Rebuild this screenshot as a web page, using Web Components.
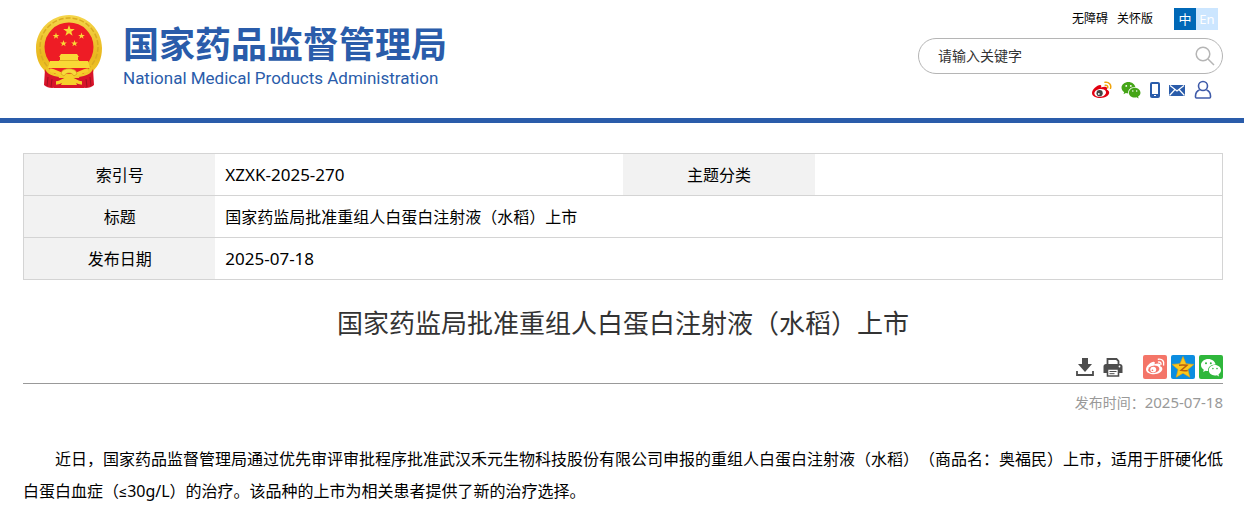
<!DOCTYPE html>
<html lang="zh-CN">
<head>
<meta charset="utf-8">
<title>国家药监局批准重组人白蛋白注射液（水稻）上市</title>
<style>
  body {
    margin: 0;
    background: #fff;
    color: #000;
    font: 16px/32px "Noto Sans", Roboto, "Noto Sans CJK SC", sans-serif;
    text-spacing-trim: space-all;
    --brand: #2a5caa;
    --line: #d4d4d4;
    --page-pad: 0 21px 0 23px;
  }
  main {
    padding: var(--page-pad);
  }
</style>
</head>
<body>
<site-header>
  <brand-logo slot="brand" text="国家药品监督管理局" sub="National Medical Products Administration"></brand-logo>
  <site-tools slot="tools"></site-tools>
</site-header>
<main>
  <info-table code="XZXK-2025-270" name="国家药监局批准重组人白蛋白注射液（水稻）上市" date="2025-07-18"></info-table>
  <article-view date="2025-07-18">
    <span slot="title">国家药监局批准重组人白蛋白注射液（水稻）上市</span>
    近日，国家药品监督管理局通过优先审评审批程序批准武汉禾元生物科技股份有限公司申报的重组人白蛋白注射液（水稻）（商品名：奥福民）上市，适用于肝硬化低白蛋白血症（≤30g/L）的治疗。该品种的上市为相关患者提供了新的治疗选择。
  </article-view>
</main>

<script>
const WECHAT = `
  <path d="M7.400 1C3.300 1 0 3.700 0 7.100c0 1.900 1.100 3.600 2.800 4.700L2.100 14l2.500-1.300c.8.2 1.700.4 2.500.4-.7-3.700 2.700-6.900 7.500-6.700C13.900 3.300 11 1 7.400 1z"/>
  <path d="M20 12.300c0-2.900-2.800-5.200-6.100-5.200s-6.100 2.300-6.100 5.200 2.700 5.200 6.100 5.200c.7 0 1.400-.1 2-.3l2.100 1.200-.5-2c1.500-1 2.500-2.400 2.500-4.100z"/>
  <g class="eye"><circle cx="5" cy="5.200" r="1"/><circle cx="9.800" cy="5.200" r="1"/><circle cx="11.900" cy="10.600" r=".8"/><circle cx="16" cy="10.600" r=".8"/></g>`;

const WEIBO = `
  <path class="body" d="M8.700 6.500c1-1 .9-2.600-.6-2.600C5 4 0 8.500 0 12c0 3.300 4.200 5 8.300 5 5.300 0 8.900-2.900 8.900-5.500 0-1.600-1.300-2.300-2.400-2.700.6-1.600.3-2.500-.8-2.800-1.400-.4-3.200.1-5.300.5z"/>
  <ellipse class="white" cx="8.200" cy="11.900" rx="5.900" ry="3.900" transform="rotate(-9 8.200 11.900)"/>
  <circle class="pupil" cx="7.600" cy="12.200" r="3.100"/>
  <circle class="white" cx="6.800" cy="12.900" r=".9"/>
  <path class="wave" d="M13 1.300c3.900-.7 6.600 2.300 5.500 6M13.200 4.200c1.800-.3 2.900.9 2.500 2.600"/>`;

class SiteHeader extends HTMLElement {
  constructor() {
    super();
    this.attachShadow({ mode: "open" });
    this.shadowRoot.innerHTML = `
      <style>
        :host { display: block; border-bottom: 5px solid var(--brand); }
        header {
          display: flex;
          justify-content: space-between;
          align-items: flex-start;
          padding: var(--page-pad);
        }
      </style>
      <header>
        <slot name="brand"></slot>
        <slot name="tools"></slot>
      </header>
    `;
  }
}
customElements.define("site-header", SiteHeader);

class BrandLogo extends HTMLElement {
  constructor() {
    super();
    this.attachShadow({ mode: "open" });
    this.shadowRoot.innerHTML = `
      <style>
        :host { display: block; padding: 14px 0 28px 13px; }
        a {
          display: flex;
          gap: 20px;
          color: var(--brand);
          text-decoration: none;
          white-space: nowrap;
        }
        svg { display: block; width: 67px; height: 75px; }
        .names { padding-top: 10px; }
        strong { display: block; font-size: 36px; line-height: 42px; }
        span { display: block; font: 17px/24px Roboto, sans-serif; }
      </style>
      <a href="#">
        <svg viewBox="0 0 67 75" aria-hidden="true">
          <defs>
            <linearGradient id="gold" x2="0" y2="1">
              <stop offset="0" stop-color="#f5d64b"/><stop offset=".6" stop-color="#e9b81e"/><stop offset="1" stop-color="#f4cf2e"/>
            </linearGradient>
            <path id="star" d="M0-5 1.200-1.600H4.800L1.900.6 3 4 0 1.900-3 4-1.900.6-4.800-1.600H-1.200z"/>
          </defs>
          <path fill="url(#gold)" d="M33 1C51 1 66 16 66 34c0 11-4 18-8 22l-6 14H14L8 56C4 52 0 45 0 34 0 16 15 1 33 1z"/>
          <circle cx="33" cy="33" r="29" fill="none" stroke="#d9ab22" stroke-width="1.500" stroke-dasharray="5 2"/>
          <circle cx="33" cy="33" r="24.500" fill="#ee1c25"/>
          <g fill="#f9d936">
            <use href="#star" transform="translate(33 17) scale(1.200)"/>
            <use href="#star" transform="translate(20 22) scale(.7)"/>
            <use href="#star" transform="translate(45.500 22) scale(.7)"/>
            <use href="#star" transform="translate(27.500 29.500) scale(.7)"/>
            <use href="#star" transform="translate(38.500 29.500) scale(.7)"/>
            <path d="M25 40h16l2 3H23zM24 43h18v4H24zM14 47h38l2 7H12z"/>
          </g>
          <path d="M23 46.500h20" stroke="#dcae1f"/>
          <path fill="#ee1c25" d="M13 54h40l-6 6H19z"/>
          <path fill="#d8142a" d="M9 55c2 5 7 7 14 8l-3 10c-3 2-9 1-12-2zM57 55c-2 5-7 7-14 8l3 10c3 2 9 1 12-2z"/>
          <path d="M12 63l-1 9M16 65l-1 8M54 63l1 9M50 65l1 8" stroke="#a30f20"/>
          <path fill="#d8142a" d="M18 64h30v10H18z"/>
          <path d="M14 56c7 1 11 6 19 6s12-5 19-6M20 69c5 0 8-4 13-5 5 1 8 5 13 5" fill="none" stroke="#f6cf2b" stroke-width="3.500"/>
          <path d="M25 60c0-7 16-7 16 0l-3 2c-2-4-8-4-10 0z" fill="#f8d93c" stroke="#d49d18" stroke-width=".7"/>
          <path d="M27 66h12l2 5H25z" fill="#f6cf2b"/>
        </svg>
        <div class="names"><strong></strong><span></span></div>
      </a>
    `;
  }

  connectedCallback() {
    this.shadowRoot.querySelector("strong").textContent = this.getAttribute("text");
    this.shadowRoot.querySelector("span").textContent = this.getAttribute("sub");
  }
}
customElements.define("brand-logo", BrandLogo);

class SiteTools extends HTMLElement {
  constructor() {
    super();
    this.attachShadow({ mode: "open" });
    this.shadowRoot.innerHTML = `
      <style>
        :host { display: block; width: 305px; padding-top: 8px; }
        a { color: inherit; text-decoration: none; }
        .top {
          display: flex;
          justify-content: flex-end;
          gap: 9px;
          padding-right: 5px;
          font-size: 12px;
          line-height: 22px;
        }
        .lang { display: flex; margin-left: 12px; color: #fff; text-align: center; font-size: 13px; }
        .lang a { width: 22px; background: #cce6ff; }
        .lang .on { background: #0068b7; }
        form {
          display: flex;
          align-items: center;
          box-sizing: border-box;
          height: 36px;
          margin-top: 8px;
          padding: 0 7px 0 19px;
          border: 1px solid #b5b5b5;
          border-radius: 18px;
        }
        input {
          flex: 1;
          min-width: 0;
          padding: 0;
          border: 0;
          outline: 0;
          background: none;
          font: inherit;
          font-size: 14px;
          line-height: 20px;
        }
        input::placeholder { color: #333; opacity: 1; }
        button { padding: 0; border: 0; background: none; }
        svg { display: block; }
        nav {
          display: flex;
          justify-content: flex-end;
          align-items: center;
          gap: 9px;
          padding: 6px 11px 0 0;
        }
        .body { fill: #e10010; }
        .white { fill: #fff; }
        .pupil { fill: #444; }
        .wave { fill: none; stroke: #f0a40c; stroke-width: 1.500; stroke-linecap: round; }
        .wechat { fill: #45a517; }
        .eye { fill: #fff; }
      </style>
      <div class="top">
        <a href="#">无障碍</a>
        <a href="#">关怀版</a>
        <div class="lang"><a class="on" href="#">中</a><a href="#">En</a></div>
      </div>
      <form>
        <input type="text" placeholder="请输入关键字" aria-label="请输入关键字">
        <button type="button" aria-label="搜索">
          <svg width="20" height="20" viewBox="0 0 20 20" fill="none" stroke="#b5b5b5" stroke-width="1.500"><circle cx="8" cy="8" r="6.800"/><path d="M13 13l6 6"/></svg>
        </button>
      </form>
      <nav>
        <a href="#" aria-label="微博"><svg width="20" height="18" viewBox="0 0 20 18">${WEIBO}</svg></a>
        <a href="#" aria-label="微信"><svg class="wechat" width="20" height="18" viewBox="0 0 20 19">${WECHAT}</svg></a>
        <a href="#" aria-label="移动客户端"><svg width="10" height="18" viewBox="0 0 10 18"><rect y="1" width="10" height="16" rx="2" fill="#2a5caa"/><path fill="#fff" d="M2 3h6v10H2zM4 14h2v1H4z"/></svg></a>
        <a href="#" aria-label="邮箱"><svg width="16" height="18" viewBox="0 0 16 18"><path fill="#2a5caa" d="M0 4h16v11H0z"/><path d="M1 4.500l7 5.500 7-5.500M.5 14.500l5.500-6M15.500 14.500l-5.500-6" fill="none" stroke="#fff" stroke-width="1.200"/></svg></a>
        <a href="#" aria-label="个人中心"><svg width="18" height="20" viewBox="0 0 18 20" fill="none" stroke="#3f5ba9" stroke-width="1.600"><circle cx="9" cy="6" r="4.500"/><path d="M5.500 10C3 11 1.500 13.300 1.500 16v1c0 .7.400 1 1 1h13c.6 0 1-.3 1-1v-1c0-2.700-1.500-5-4-6"/></svg></a>
      </nav>
    `;
  }
}
customElements.define("site-tools", SiteTools);

class InfoTable extends HTMLElement {
  constructor() {
    super();
    this.attachShadow({ mode: "open" });
    this.shadowRoot.innerHTML = `
      <style>
        :host { display: block; padding-top: 30px; }
        table {
          width: 100%;
          table-layout: fixed;
          border-collapse: collapse;
          border: 1px solid var(--line);
        }
        .label { width: 16%; }
        tr { border-bottom: 1px solid var(--line); }
        th, td { height: 42px; padding: 0; line-height: 24px; box-sizing: border-box; }
        th { background: #f2f2f2; font-weight: normal; }
        td { padding-left: 10px; }
        .latin { font-size: 17px; }
      </style>
      <table>
        <colgroup><col class="label"><col><col class="label"><col></colgroup>
        <tr><th scope="row">索引号</th><td class="latin" data-key="code"></td><th scope="row">主题分类</th><td></td></tr>
        <tr><th scope="row">标题</th><td colspan="3" data-key="name"></td></tr>
        <tr><th scope="row">发布日期</th><td class="latin" colspan="3" data-key="date"></td></tr>
      </table>
    `;
  }

  connectedCallback() {
    this.shadowRoot.querySelectorAll("[data-key]").forEach((cell) => {
      cell.textContent = this.getAttribute(cell.dataset.key);
    });
  }
}
customElements.define("info-table", InfoTable);

class ShareBar extends HTMLElement {
  constructor() {
    super();
    this.attachShadow({ mode: "open" });
    this.shadowRoot.innerHTML = `
      <style>
        :host {
          display: flex;
          justify-content: flex-end;
          align-items: center;
          gap: 4px;
          padding-bottom: 4px;
          border-bottom: 1px solid #999;
        }
        button { padding: 0; border: 0; background: none; }
        button:nth-of-type(2) { margin: 0 16px 0 4px; }
        svg { display: block; }
        .body, .pupil { fill: #fff; }
        .white { fill: #f47568; }
        .wave { fill: none; stroke: #fff; stroke-width: 1.500; stroke-linecap: round; }
        .wechat { fill: #fff; }
        .eye { fill: #2fb73c; }
      </style>
      <button type="button" aria-label="下载"><svg width="20" height="20" viewBox="0 0 20 20"><path fill="#4d4d4d" d="M7 1h6v6h4l-7 8-7-8h4z"/><path d="M2 14v4h16v-4" fill="none" stroke="#4d4d4d" stroke-width="1.800"/></svg></button>
      <button type="button" aria-label="打印"><svg width="20" height="20" viewBox="0 0 20 20"><path d="M4.500 7V2h9l2 2v3" fill="#fff" stroke="#4d4d4d" stroke-width="1.800"/><path fill="#4d4d4d" d="M3 7h14c1.500 0 2.500 1 2.500 2.500V16H16v-4H4v4H.5V9.500C.5 8 1.500 7 3 7z"/><path d="M4.500 12h11v7h-11z" fill="#fff" stroke="#4d4d4d" stroke-width="1.600"/><path d="M6.500 14.500h7M6.500 16.700h5" stroke="#4d4d4d"/><circle cx="16.500" cy="9.500" r=".9" fill="#fff"/></svg></button>
      <button type="button" aria-label="分享到微博"><svg width="24" height="24" viewBox="0 0 24 24"><rect width="24" height="24" rx="2" fill="#f47568"/><g transform="translate(3 3) scale(.95)">${WEIBO}</g></svg></button>
      <button type="button" aria-label="分享到QQ空间"><svg width="24" height="24" viewBox="0 0 24 24"><rect width="24" height="24" rx="2" fill="#0c8de0"/><path d="M12 1.500l3 7.200 7.800.7-5.900 5.200 1.900 7.600-6.800-4-6.800 4 1.900-7.600-5.900-5.200 7.800-.7z" fill="#fcc81d" stroke="#e9a508" stroke-width=".6"/><path d="M8 10.200c3-.5 5.500-.4 8 .1l-6 5c2.300.5 4.500.4 6.700.1" fill="none" stroke="#b85d0d" stroke-width="1.500"/></svg></button>
      <button type="button" aria-label="分享到微信"><svg class="wechat" width="24" height="24" viewBox="0 0 24 24"><rect width="24" height="24" rx="2" fill="#2fb73c"/><g transform="translate(2 3)">${WECHAT}</g></svg></button>
    `;
  }
}
customElements.define("share-bar", ShareBar);

class ArticleView extends HTMLElement {
  constructor() {
    super();
    this.attachShadow({ mode: "open" });
    this.shadowRoot.innerHTML = `
      <style>
        :host { display: block; padding-top: 23px; }
        h1 {
          margin: 0 0 12px;
          color: #333;
          font-size: 26px;
          font-weight: normal;
          line-height: 40px;
          text-align: center;
        }
        .date { color: #999; font-size: 14px; line-height: 20px; padding: 8px 0 0; text-align: right; }
        time { font-size: 15px; }
        p { margin: 30px 0 0; text-indent: 2em; }
      </style>
      <h1><slot name="title"></slot></h1>
      <share-bar></share-bar>
      <div class="date">发布时间：<time></time></div>
      <p><slot></slot></p>
    `;
  }

  connectedCallback() {
    this.shadowRoot.querySelector("time").textContent = this.getAttribute("date");
  }
}
customElements.define("article-view", ArticleView);
</script>
</body>
</html>
